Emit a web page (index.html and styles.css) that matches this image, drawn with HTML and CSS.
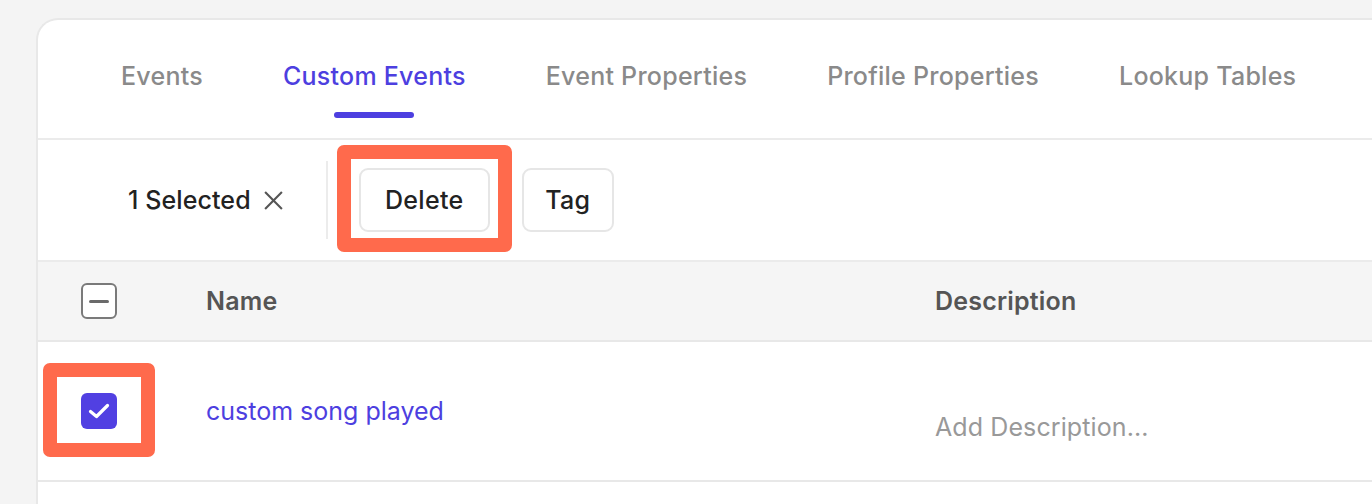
FILE: index.html
```html
<!DOCTYPE html>
<html>
<head>
<meta charset="utf-8">
<link rel="stylesheet" href="styles.css">
</head>
<body>
<div class="card">
  <nav class="tabs">
    <div class="tab">Events</div>
    <div class="tab active">Custom Events</div>
    <div class="tab">Event Properties</div>
    <div class="tab">Profile Properties</div>
    <div class="tab">Lookup Tables</div>
  </nav>
  <div class="actions">
    <div class="selected">1 Selected <span class="x">
      <svg width="21" height="21" viewBox="0 0 20 20"><path d="M2 2 L18 18 M18 2 L2 18" stroke="#555" stroke-width="2" fill="none"/></svg>
    </span></div>
    <div class="divider"></div>
    <button class="btn highlighted">Delete</button>
    <button class="btn">Tag</button>
  </div>
  <div class="row head">
    <div class="cell-check"><span class="cb minus"></span></div>
    <div class="cell-name">Name</div>
    <div class="cell-desc">Description</div>
  </div>
  <div class="row body">
    <div class="cell-check"><span class="cb checked highlighted">
      <svg width="24" height="24" viewBox="0 0 24 24"><path d="M3.5 12.5 L9.5 17.5 L20.5 6.5" stroke="#fff" stroke-width="3.2" stroke-linecap="round" stroke-linejoin="round" fill="none"/></svg>
    </span></div>
    <div class="cell-name"><a class="link">custom song played</a></div>
    <div class="cell-desc placeholder">Add Description...</div>
  </div>
</div>
</body>
</html>
```

FILE: styles.css
```css
* { box-sizing: border-box; }
html, body { margin: 0; padding: 0; }
body {
  background: #f4f4f4;
  font-family: Inter, "Noto Sans", sans-serif;
  padding: 18px 0 0 36px;
  height: 504px;
  overflow: hidden;
}
.card {
  background: #fff;
  border: 2px solid #e8e8e8;
  border-right: none;
  border-bottom: none;
  border-top-left-radius: 22px;
  height: 486px;
}
.tabs {
  display: flex;
  gap: 80px;
  padding-left: 83px;
  border-bottom: 2px solid #ebebeb;
  height: 120px;
}
.tab {
  position: relative;
  font-size: 25px;
  line-height: 32px;
  font-weight: 500;
  color: #8a8a8a;
  padding-top: 40px;
  letter-spacing: 0.25px;
}
.tab.active { color: #4d3fe0; }
.tab.active::after {
  content: "";
  position: absolute;
  left: 50%;
  margin-left: -40px;
  top: 92px;
  width: 80px;
  height: 6px;
  border-radius: 3px;
  background: #4d3fe0;
}
.actions {
  display: flex;
  align-items: center;
  height: 122px;
  padding-left: 90px;
  border-bottom: 2px solid #ebebeb;
}
.selected {
  display: flex;
  align-items: center;
  font-size: 25px;
  font-weight: 500;
  color: #222;
  letter-spacing: 0.1px;
}
.selected .x { display: flex; margin-left: 12px; }
.divider {
  width: 2px;
  height: 78px;
  background: #ececec;
  margin: 0 31px 0 42px;
}
.btn {
  position: relative;
  font-family: inherit;
  font-size: 25px;
  font-weight: 500;
  color: #222;
  background: #fff;
  border: 2px solid #e6e6e6;
  border-radius: 9px;
  height: 64px;
  padding: 0;
  margin-right: 32px;
  letter-spacing: 0.3px;
}
.btn.highlighted { width: 131px; }
.btn.highlighted::after {
  content: "";
  position: absolute;
  left: -24px;
  top: -25px;
  right: -24px;
  bottom: -22px;
  border: 14px solid #ff6a4c;
  border-radius: 7px;
}
.btn + .btn { width: 92px; }
.row {
  display: flex;
  align-items: center;
  border-bottom: 2px solid #e8e8e8;
}
.row.head {
  background: #f5f5f5;
  height: 80px;
}
.row.body { height: 140px; }
.cell-check { width: 168px; padding-left: 43px; display: flex; }
.cell-name { width: 729px; font-size: 25px; }
.cell-desc { font-size: 25px; }
.head .cell-name, .head .cell-desc {
  font-weight: 600;
  color: #555;
  letter-spacing: 0.2px;
}
.cb {
  position: relative;
  width: 36px;
  height: 36px;
  border-radius: 6px;
  display: flex;
  align-items: center;
  justify-content: center;
}
.cb.minus { border: 2px solid #7a7a7a; background: #fff; }
.cb.minus::before {
  content: "";
  width: 20px;
  height: 3px;
  border-radius: 2px;
  background: #6a6a6a;
}
.cb.checked { background: #5140e2; }
.cb.highlighted::after {
  content: "";
  position: absolute;
  left: -38px;
  top: -30px;
  right: -38px;
  bottom: -28px;
  border: 14px solid #ff6a4c;
  border-radius: 7px;
}
.link { color: #4d3fe0; }
.placeholder { color: #999; padding-top: 32px; letter-spacing: 0.1px; }
```
